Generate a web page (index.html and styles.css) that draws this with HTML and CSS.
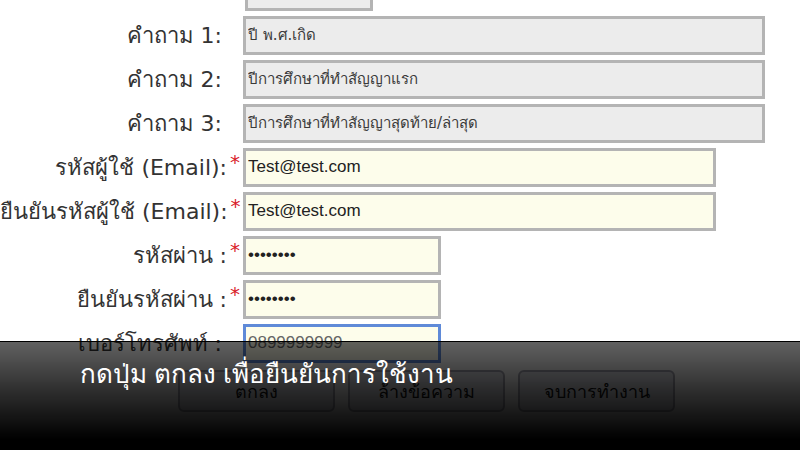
FILE: index.html
```html
<!DOCTYPE html>
<html>
  <head>
    <meta charset="UTF-8" />
    <title>สมัครสมาชิก</title>
    <link rel="stylesheet" href="styles.css">
  </head>

  <body>
    <div id="content">
      <div class="formRow">
        <div class="rowLabel"></div>
        <div class="rowField"><input class="grey short" type="text" disabled /></div>
      </div>
      <div class="formRow">
        <div class="rowLabel">คำถาม 1:</div>
        <div class="rowField"><input class="grey wide" type="text" value="ปี พ.ศ.เกิด" disabled /></div>
      </div>
      <div class="formRow">
        <div class="rowLabel">คำถาม 2:</div>
        <div class="rowField"><input class="grey wide" type="text" value="ปีการศึกษาที่ทำสัญญาแรก" disabled /></div>
      </div>
      <div class="formRow">
        <div class="rowLabel">คำถาม 3:</div>
        <div class="rowField"><input class="grey wide" type="text" value="ปีการศึกษาที่ทำสัญญาสุดท้าย/ล่าสุด" disabled /></div>
      </div>
      <div class="formRow">
        <div class="rowLabel required">รหัสผู้ใช้ (Email):<span class="star">*</span></div>
        <div class="rowField"><input class="email" type="text" value="Test@test.com" /></div>
      </div>
      <div class="formRow">
        <div class="rowLabel required">ยืนยันรหัสผู้ใช้ (Email):<span class="star">*</span></div>
        <div class="rowField"><input class="email" type="text" value="Test@test.com" /></div>
      </div>
      <div class="formRow">
        <div class="rowLabel required">รหัสผ่าน :<span class="star">*</span></div>
        <div class="rowField"><input class="pass" type="password" value="12345678" /></div>
      </div>
      <div class="formRow">
        <div class="rowLabel required">ยืนยันรหัสผ่าน :<span class="star">*</span></div>
        <div class="rowField"><input class="pass" type="password" value="12345678" /></div>
      </div>
      <div class="formRow">
        <div class="rowLabel">เบอร์โทรศัพท์ :</div>
        <div class="rowField"><input class="pass phone" type="text" value="0899999999" /></div>
      </div>

      <div class="buttonBar">
        <button>ตกลง</button>
        <button>ล้างข้อความ</button>
        <button>จบการทำงาน</button>
      </div>
    </div>

    <!-- caption band over the page -->
    <div id="caption">
      <p>กดปุ่ม ตกลง เพื่อยืนยันการใช้งาน</p>
    </div>
  </body>
</html>
```

FILE: styles.css
```css
html,
body {
  margin: 0;
  height: 100%;
  overflow: hidden;
  background: #fff;
}

#content {
  margin-top: -31px;
  font-family: Tahoma, "DejaVu Sans", "Liberation Sans", sans-serif;
  color: #333;
}

.formRow {
  display: flex;
  align-items: center;
  height: 44px;
}

.rowLabel {
  width: 222px;
  padding-right: 21px;
  text-align: right;
  font-size: 22px;
  white-space: nowrap;
}

.rowLabel.required {
  width: 219px;
  padding-right: 24px;
}

.star {
  display: inline-block;
  width: 16px;
  margin-right: -24px;
  text-align: center;
  color: #d9202a;
  font-size: 20px;
  vertical-align: top;
}

input {
  box-sizing: border-box;
  height: 39px;
  border: 3px solid #b4b4b4;
  padding: 0 2px;
  font-family: "Liberation Sans", sans-serif;
  font-size: 17px;
  color: #222;
  background: #fdfdeb;
  outline: none;
}

input.grey {
  background: #ececec;
  color: #3a3a3a;
  font-family: Tahoma, "DejaVu Sans", sans-serif;
  font-size: 15px;
}

.short {
  width: 128px;
  margin-left: 2px;
}

.wide {
  width: 522px;
}

.email {
  width: 473px;
}

.pass {
  width: 198px;
}

.phone {
  border-color: #5f8ad8;
  color: #666;
}

.buttonBar {
  display: flex;
  gap: 13px;
  margin: 5px 0 0 178px;
}

.buttonBar button {
  width: 157px;
  height: 42px;
  border: 2px solid #a8a8b4;
  border-radius: 6px;
  background: #e4e5ec;
  color: #111;
  font-family: Tahoma, "DejaVu Sans", sans-serif;
  font-size: 18px;
}

#caption {
  position: absolute;
  left: 0;
  right: 0;
  top: 341px;
  bottom: 0;
  border-top: 1px solid rgba(0, 0, 0, 0.25);
  background: linear-gradient(rgba(0, 0, 0, 0.62), rgba(0, 0, 0, 0.82) 45%, #000 90%);
}

#caption p {
  margin: 11px 0 0 80px;
  color: #fff;
  font-family: "Noto Sans", "DejaVu Sans", sans-serif;
  font-size: 26px;
}
```
